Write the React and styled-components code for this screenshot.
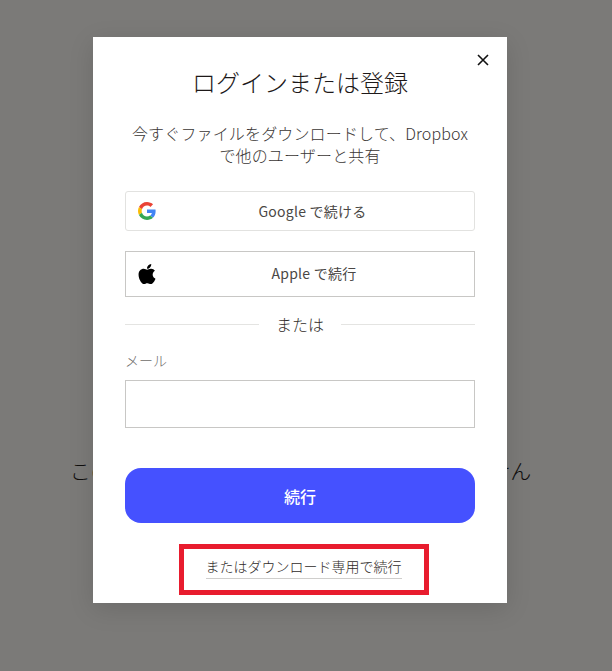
import React from "react";
import styled, { createGlobalStyle } from "styled-components";

const Global = createGlobalStyle`
  html, body { margin: 0; padding: 0; }
  body {
    background: #7b7a78;
    font-family: "Noto Sans CJK JP", "Noto Sans", sans-serif;
    font-weight: 300;
    color: #1e1919;
  }
`;

const Page = styled.div`
  position: relative;
  width: 612px;
  height: 671px;
  overflow: hidden;
  background: #7b7a78;
`;

const BackdropText = styled.p`
  margin: 0;
  padding: 455px 11px 0 0;
  text-align: center;
  font-size: 21px;
  line-height: 30px;
  color: #0f0e0d;
  white-space: nowrap;
`;

const Modal = styled.div`
  position: absolute;
  left: 93px;
  top: 37px;
  width: 414px;
  height: 566px;
  box-sizing: border-box;
  padding: 29px 32px 0;
  background: #fff;
  display: flex;
  flex-direction: column;
  box-shadow: 0 6px 24px rgba(0, 0, 0, 0.12);
`;

const Close = styled.button`
  position: absolute;
  top: 16px;
  right: 17px;
  width: 14px;
  height: 14px;
  padding: 0;
  border: 0;
  background: none;
  display: flex;
  svg { display: block; }
`;

const Title = styled.h1`
  margin: 0;
  font-size: 24px;
  line-height: 32px;
  font-weight: 300;
  text-align: center;
  color: #1e1919;
`;

const Subtitle = styled.p`
  margin: 24px -4px 0;
  font-size: 16px;
  line-height: 22px;
  font-weight: 300;
  letter-spacing: 0.15px;
  text-align: center;
  color: #3a3634;
`;

const Provider = styled.button`
  position: relative;
  box-sizing: border-box;
  width: 350px;
  height: ${(p) => p.$height}px;
  margin-top: ${(p) => p.$top}px;
  padding: 0;
  background: #fff;
  border: 1px solid ${(p) => p.$border};
  border-radius: ${(p) => p.$radius}px;
  font-family: inherit;
  font-size: 14px;
  font-weight: 400;
  letter-spacing: 0.25px;
  color: #4a4745;
  display: flex;
  align-items: center;
  justify-content: center;
`;

const ProviderIcon = styled.span`
  position: absolute;
  left: ${(p) => p.$left}px;
  top: 50%;
  transform: translateY(-50%);
  display: flex;
  svg { display: block; }
`;

const ProviderLabel = styled.span`
  margin-left: ${(p) => p.$shift}px;
  margin-bottom: ${(p) => p.$lift}px;
`;

const Divider = styled.div`
  display: flex;
  align-items: center;
  gap: 17px;
  margin-top: 16px;
  height: 22px;
  font-size: 16px;
  font-weight: 300;
  color: #2f2b29;
  &::before, &::after {
    content: "";
    flex: 1;
    height: 1px;
    margin-top: 1px;
    background: #e4e4e2;
  }
`;

const FieldLabel = styled.label`
  display: block;
  margin-top: 14px;
  font-size: 14px;
  line-height: 22px;
  color: #6f6d6b;
`;

const Input = styled.input`
  display: block;
  box-sizing: border-box;
  width: 350px;
  height: 48px;
  margin-top: 9px;
  border: 1px solid #c8c7c5;
  background: #fff;
  outline: none;
`;

const Continue = styled.button`
  width: 350px;
  height: 55px;
  margin-top: 40px;
  border: 0;
  border-radius: 16px;
  background: #4551ff;
  color: #fff;
  font-family: inherit;
  font-size: 16px;
  font-weight: 500;
`;

const Highlight = styled.div`
  align-self: center;
  box-sizing: border-box;
  width: 250px;
  height: 51px;
  margin: 21px 0 0 7px;
  border: 5px solid #e81c2e;
  display: flex;
  align-items: center;
  justify-content: center;
`;

const DownloadLink = styled.a`
  font-size: 14px;
  line-height: 20px;
  font-weight: 300;
  color: #2f2b29;
  padding-bottom: 2px;
  border-bottom: 1px solid #cfcecc;
  margin-bottom: 5px;
`;

const GoogleIcon = () => (
  <svg width="18" height="18" viewBox="0 0 48 48">
    <path fill="#EA4335" d="M24 9.5c3.54 0 6.71 1.22 9.21 3.6l6.85-6.85C35.9 2.38 30.47 0 24 0 14.62 0 6.51 5.38 2.56 13.22l7.98 6.19C12.43 13.72 17.74 9.5 24 9.5z" />
    <path fill="#4285F4" d="M46.98 24.55c0-1.57-.15-3.09-.38-4.55H24v9.02h12.94c-.58 2.96-2.26 5.48-4.78 7.18l7.73 6c4.51-4.18 7.09-10.36 7.09-17.65z" />
    <path fill="#FBBC05" d="M10.53 28.59c-.48-1.45-.76-2.99-.76-4.59s.27-3.14.76-4.59l-7.98-6.19C.92 16.46 0 20.12 0 24c0 3.88.92 7.54 2.56 10.78l7.97-6.19z" />
    <path fill="#34A853" d="M24 48c6.48 0 11.93-2.13 15.89-5.81l-7.73-6c-2.15 1.45-4.92 2.3-8.16 2.3-6.26 0-11.57-4.22-13.47-9.91l-7.98 6.19C6.51 42.62 14.62 48 24 48z" />
  </svg>
);

const AppleIcon = () => (
  <svg width="20" height="23" viewBox="0 0 384 512">
    <path fill="#000" d="M318.7 268.7c-.2-36.7 16.4-64.4 50-84.8-18.8-26.9-47.2-41.7-84.7-44.6-35.5-2.8-74.3 20.7-88.5 20.7-15 0-49.4-19.7-76.4-19.7C63.3 141.2 4 184.8 4 273.5q0 39.3 14.4 81.2c12.8 36.7 59 126.7 107.2 125.2 25.2-.6 43-17.9 75.8-17.9 31.8 0 48.3 17.9 76.4 17.9 48.6-.7 90.4-82.5 102.6-119.3-65.2-30.7-61.7-90-61.7-91.9zm-56.6-164.2c27.3-32.4 24.8-61.9 24-72.5-24.1 1.4-52 16.4-67.9 34.9-17.5 19.8-27.8 44.3-25.6 71.9 26.1 2 49.9-11.4 69.5-34.3z" />
  </svg>
);

export default function App() {
  return (
    <Page>
      <Global />
      <BackdropText>このファイルのプレビューは現在表示できません</BackdropText>
      <Modal>
        <Close aria-label="閉じる">
          <svg width="14" height="14" viewBox="0 0 14 14">
            <path d="M2 2l10 10M12 2L2 12" stroke="#111" strokeWidth="1.6" fill="none" />
          </svg>
        </Close>
        <Title>ログインまたは登録</Title>
        <Subtitle>
          今すぐファイルをダウンロードして、Dropbox
          <br />
          で他のユーザーと共有
        </Subtitle>
        <Provider $height={40} $top={25} $border="#e2e2e0" $radius={3}>
          <ProviderIcon $left={12}><GoogleIcon /></ProviderIcon>
          <ProviderLabel $shift={25} $lift={0}>Google で続ける</ProviderLabel>
        </Provider>
        <Provider $height={46} $top={20} $border="#c8c7c5" $radius={0}>
          <ProviderIcon $left={11}><AppleIcon /></ProviderIcon>
          <ProviderLabel $shift={28} $lift={2}>Apple で続行</ProviderLabel>
        </Provider>
        <Divider>または</Divider>
        <FieldLabel>メール</FieldLabel>
        <Input type="email" />
        <Continue>続行</Continue>
        <Highlight>
          <DownloadLink>またはダウンロード専用で続行</DownloadLink>
        </Highlight>
      </Modal>
    </Page>
  );
}
